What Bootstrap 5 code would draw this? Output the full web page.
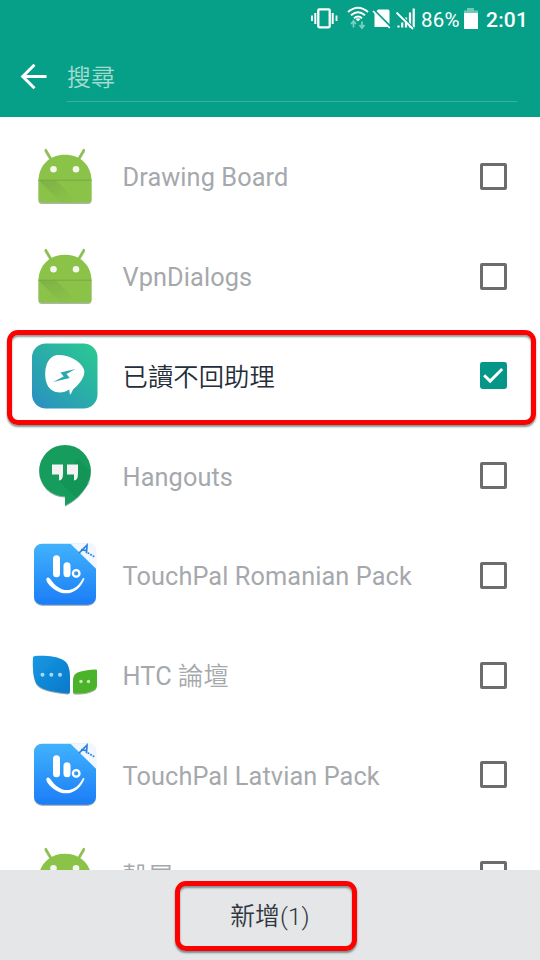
<!DOCTYPE html>
<html lang="zh-Hant">
<head>
<meta charset="utf-8">
<meta name="viewport" content="width=device-width, initial-scale=1">
<title>新增應用程式</title>
<link href="https://cdn.jsdelivr.net/npm/bootstrap@5.3.0/dist/css/bootstrap.min.css" rel="stylesheet">
<style>
body{font-family:Roboto,"Noto Sans CJK TC",sans-serif;background:#fff}
.screen{width:540px;height:960px}
.topbar{height:117px;background:#069f88;color:#fff}
.status{height:40px;padding-right:14px}
.battery-pct{font-size:20.5px;letter-spacing:.2px;line-height:24px;width:45px;padding-left:3px}
.clock{font-size:21px;font-weight:500;letter-spacing:.2px;line-height:24px;width:40px;margin-left:7px}
.searchrow{height:77px;padding:0 23px 15px 20px}
.field{margin-left:19px;border-bottom:1px solid #3bb09f}
.search-text{font-size:24px;font-weight:350;line-height:49px;color:#a3dbd1}
.apps{padding-top:9.6px}
.app-item{height:99.75px;padding:0 33px 0 30px;flex-shrink:0}
.app-item svg{flex-shrink:0}
.label-text{margin-left:22.5px;padding-top:4px;font-size:25.3px;line-height:36px;letter-spacing:.1px;color:#a5a8ac}
.label-text.han,.han{font-weight:350}
.picked .label-text{color:#252d38;font-weight:350}
.tick{width:27px;height:27px;border:3px solid #6c6c6c;border-radius:2px}
.ring{border:5px solid #fe0000;border-radius:11px;box-shadow:0 2px 2px rgba(40,80,80,.6),inset 0 2px 2px rgba(40,80,80,.55)}
.ring-row{left:7px;top:330px;width:529px;height:95px}
.footer{height:90px;background:#e4e6e8}
.add{width:182px;height:70px;margin-top:11px;margin-right:8px;padding:1px 0 0 8px;color:#303640;font-size:24.8px;font-weight:350;line-height:58px}
</style>
</head>
<body>
<svg width="0" height="0" class="position-absolute">
<defs>
<linearGradient id="tealGrad" x1="0" y1="1" x2="1" y2="0"><stop offset="0" stop-color="#2a8ec4"/><stop offset=".5" stop-color="#2aada8"/><stop offset="1" stop-color="#2aca91"/></linearGradient>
<linearGradient id="skyGrad" x1="0" y1="0" x2="0" y2="1"><stop offset="0" stop-color="#40b2fd"/><stop offset="1" stop-color="#1c7df7"/></linearGradient>
<linearGradient id="foldGrad" x1="0" y1="0" x2=".8" y2="1"><stop offset="0" stop-color="#76a442"/><stop offset="1" stop-color="#8bc34a"/></linearGradient>
<linearGradient id="leafGrad" x1="0" y1="0" x2="1" y2="1"><stop offset="0" stop-color="#1798e2"/><stop offset="1" stop-color="#0878ca"/></linearGradient>
<filter id="soft" x="-10%" y="-10%" width="120%" height="125%"><feDropShadow dx="0" dy="1" stdDeviation=".7" flood-color="#000" flood-opacity=".4"/></filter>
<symbol id="robot" viewBox="0 -0.7 70 80">
<g filter="url(#soft)"><path d="M15.800 13.400l5 8.600M53.800 13.400l-5 8.600" stroke="#8bc34a" stroke-width="2.400" stroke-linecap="round"/>
<path d="M8.500 43.500C9 28 20 18 35 18s26 10 26.500 25.500V63q0 3-3 3h-47q-3 0-3-3z" fill="#8bc34a"/></g>
<path d="M8.500 43.500L31 66h17L26 43.500z" fill="url(#foldGrad)" opacity=".6"/><path d="M8.500 43.500h53" stroke="#76a743" stroke-width="1"/>
<circle cx="23.500" cy="32.500" r="3.300" fill="#f5f6ef"/><circle cx="46" cy="32.500" r="3.300" fill="#f5f6ef"/>
</symbol>
<symbol id="bolt" viewBox="0 -0.5 70 80">
<rect x="2" y="7" width="65.500" height="65" rx="14" fill="url(#tealGrad)"/>
<path d="M25 19c10-2 25 4 29 14 2 7-5 15-11 20q-1 3-3 5.500l-.8-5.500c-7 5-18 4-22-5-4-10-2-26 7.800-29z" fill="#fff"/>
<path d="M45.500 32.500L30.500 36l3.200 4L23 45.500l16.700-3.900-3.200-4z" fill="#2aa8ad"/>
</symbol>
<symbol id="quote" viewBox="0 0 70 80">
<g filter="url(#soft)"><circle cx="35" cy="34.700" r="25.800" fill="#179c5b"/><path d="M35 56v13.500c10-5 19-13 23-23z" fill="#179c5b"/></g>
<path d="M29 45l17 17 13-14q2-6 1.500-13L48 23z" fill="#0d8d50" opacity=".4"/>
<path d="M22 28.500h11v9q0 7-4 7v-6h-7zM37 28.500h11v9q0 7-4 7v-6h-7z" fill="#f3f3f3"/>
</symbol>
<symbol id="pal" viewBox="0 -0.7 70 80">
<g filter="url(#soft)"><rect x="4" y="8" width="62" height="61" rx="8" fill="url(#skyGrad)"/></g>
<path d="M40 7.500h18q8.500 0 8.500 8v18z" fill="#f1f7fe"/>
<path d="M49 17.500L57 9.500l-.5 8M51 14l5.500 1" fill="none" stroke="#2b84dd" stroke-width="1.700"/>
<g fill="#2b84dd"><circle cx="58.500" cy="17.500" r="1"/><circle cx="61" cy="19" r="1"/><circle cx="63.500" cy="20.500" r="1"/></g>
<rect x="23" y="19.500" width="7" height="22" rx="3.500" fill="#fff"/><rect x="33.500" y="26.500" width="7" height="15" rx="3.500" fill="#fff"/>
<circle cx="46.200" cy="37.700" r="3.300" fill="none" stroke="#fff" stroke-width="2.300"/>
<path d="M16.500 42.500q-1 2 1 4.500C28 61.500 47 62 54.500 43q-.5-1.500-2 0C45 58 30 58 20.500 43.500q-2-3-4-1z" fill="#fff"/>
</symbol>
<symbol id="leaves" viewBox="0 -1 70 80">
<g filter="url(#soft)"><path d="M3 21.500q0-1.500 2-1.500c10-.5 22 0 29 4.500 4.500 3 6 9 6 17v13.500q0 3-3 2.500c-10-1-24-3-29-8C3 45 2.500 31 3 21.500z" fill="url(#leafGrad)"/>
<path d="M67 34v14c0 4-2 6-5 7-6 2.500-12 2.500-17 2.500q-2 0-2-2V45c0-5 2-8 6-9 5-1.500 11-2.500 16-2.500q2 0 2 .5z" fill="#4bb32c"/></g>
<g fill="#a9d9f8"><circle cx="12.500" cy="38.800" r="2"/><circle cx="21.300" cy="38.800" r="2"/><circle cx="30" cy="38.800" r="2"/></g>
<g fill="#c9eabc"><circle cx="51" cy="45.500" r="1.700"/><circle cx="58.500" cy="45.500" r="1.700"/></g>
</symbol>
</defs>
</svg>
<main class="screen position-relative overflow-hidden d-flex flex-column">
<header class="topbar flex-shrink-0">
<div class="status d-flex align-items-center justify-content-end">
<svg width="108" height="40" viewBox="310 0.500 108 40" fill="none" stroke="#fff">
<rect x="318.300" y="9.800" width="11.400" height="18" rx="1" stroke-width="2.300"/>
<path d="M315.300 13.500v11M332.700 13.500v11" stroke-width="2"/><path d="M312 16v5.500M336.500 16v5.500" stroke-width="1.800"/>
<path d="M348 12.500q10-8.500 20 0M351 15.800q7-6 14 0M354 18.800q4-3.500 8 0" stroke-width="2"/><path d="M355.500 19.500q2.500-1.500 5 0L358 22z" fill="#fff" stroke="none"/>
<path d="M353.500 28v-5M351 24.500l2.500-3 2.500 3M362 22v5M359.500 25.500l2.500 3 2.500-3" stroke="#7dcdbf" stroke-width="1.800"/>
<path d="M378 10h10q1.500 0 1.500 1.500v16h-15V14z" fill="#fff" stroke="none"/>
<path d="M374.500 11l17 17" stroke="#069f88" stroke-width="2"/><path d="M373 11.500l16.800 17" stroke-width="1.700"/>
<path d="M398.500 26v2M402.200 23v5M406 18v10M410 13v15M413.700 9v19" stroke-width="2.200"/>
<path d="M398 12.500l16 17" stroke="#069f88" stroke-width="2"/><path d="M396.500 13l16.500 16.500" stroke-width="1.800"/>
</svg>
<span class="battery-pct">86%</span>
<svg width="16" height="40" viewBox="0 0 16 40"><path d="M4 8h7v2.500h4V13H1v-2.500h3z" fill="#70c9b9"/><path d="M1 13h14v16H1z" fill="#fff"/></svg>
<span class="clock">2:01</span>
</div>
<div class="searchrow d-flex align-items-stretch">
<svg width="28" height="62" viewBox="20 40 28 62" class="flex-shrink-0"><path d="M46.500 76.500H24M34.500 64.700L22.700 76.500 34.500 88.300" fill="none" stroke="#fff" stroke-width="3"/></svg>
<div class="field flex-grow-1 d-flex align-items-center"><span class="search-text pt-3">搜尋</span></div>
</div>
</header>
<section class="apps flex-grow-1 overflow-hidden d-flex flex-column">
<div class="app-item d-flex align-items-center"><svg width="70" height="80"><use href="#robot"/></svg><span class="label-text">Drawing Board</span><span class="tick ms-auto"></span></div>
<div class="app-item d-flex align-items-center"><svg width="70" height="80"><use href="#robot"/></svg><span class="label-text">VpnDialogs</span><span class="tick ms-auto"></span></div>
<div class="app-item picked d-flex align-items-center"><svg width="70" height="80"><use href="#bolt"/></svg><span class="label-text">已讀不回助理</span><svg class="ms-auto" width="27" height="27" viewBox="0 0 28 28"><rect width="28" height="28" rx="2.500" fill="#069688"/><path d="M4.300 13.800l6.200 6L23 7.200" fill="none" stroke="#fff" stroke-width="3"/></svg></div>
<div class="app-item d-flex align-items-center"><svg width="70" height="80"><use href="#quote"/></svg><span class="label-text">Hangouts</span><span class="tick ms-auto"></span></div>
<div class="app-item d-flex align-items-center"><svg width="70" height="80"><use href="#pal"/></svg><span class="label-text">TouchPal Romanian Pack</span><span class="tick ms-auto"></span></div>
<div class="app-item d-flex align-items-center"><svg width="70" height="80"><use href="#leaves"/></svg><span class="label-text">HTC <span class="han">論壇</span></span><span class="tick ms-auto"></span></div>
<div class="app-item d-flex align-items-center"><svg width="70" height="80"><use href="#pal"/></svg><span class="label-text">TouchPal Latvian Pack</span><span class="tick ms-auto"></span></div>
<div class="app-item d-flex align-items-center"><svg width="70" height="80"><use href="#robot"/></svg><span class="label-text han">殼層</span><span class="tick ms-auto"></span></div>
</section>
<footer class="footer flex-shrink-0 d-flex justify-content-center align-items-start">
<button type="button" class="add ring btn">新增(1)</button>
</footer>
<div class="ring ring-row position-absolute"></div>
</main>
<script src="https://cdn.jsdelivr.net/npm/bootstrap@5.3.0/dist/js/bootstrap.bundle.min.js"></script>
</body>
</html>
